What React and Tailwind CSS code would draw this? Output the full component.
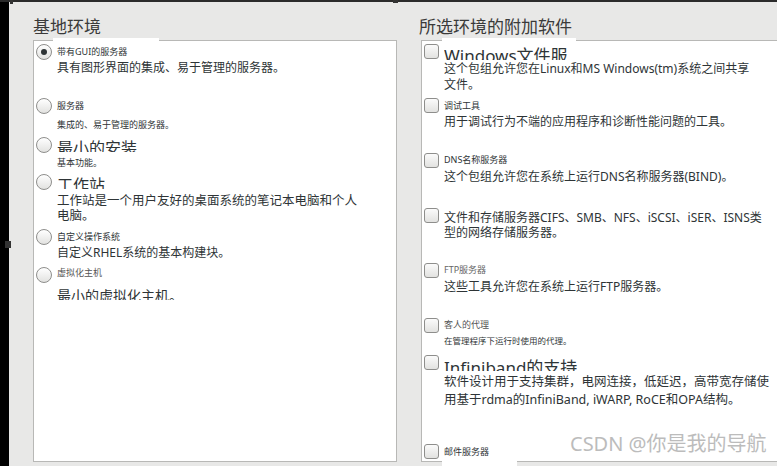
function Radio({ checked }) {
  return (
    <span className="w-[16px] h-[16px] shrink-0 rounded-full border border-[#8e8e8c] bg-linear-to-b from-white to-[#e2e2e0] flex items-center justify-center">
      {checked && <span className="w-[6px] h-[6px] rounded-full bg-[#2e3436]" />}
    </span>
  );
}

function Check() {
  return (
    <span className="w-[15px] h-[15px] shrink-0 rounded-[3px] border border-[#8e8e8c] bg-linear-to-b from-[#fbfbfb] to-[#e2e2e0]" />
  );
}

function Row({ control, className, children }) {
  return (
    <div className={'flex gap-[5px] shrink-0 ' + className}>
      {control}
      <div className="flex flex-col min-w-0">{children}</div>
    </div>
  );
}

export default function App() {
  return (
    <div className="relative w-[777px] h-[466px] overflow-hidden bg-[#e8e8e7] flex flex-col text-[#2e3436] font-['Noto_Sans','Noto_Sans_CJK_SC',sans-serif]">
      <div className="h-[2px] bg-[#2b2b2b] shrink-0" />
      <div className="flex flex-1">
        <div className="w-[9px] bg-black shrink-0" />

        {/* 基地环境 */}
        <div className="pl-[24px] flex flex-col shrink-0">
          <h2 className="h-[38px] pt-[15px] text-[17px] leading-[20px] text-[#3a3a3a]">基地环境</h2>
          <div className="h-[422px] w-[364px] border border-[#b8b8b6] bg-white pl-[2px] pt-[3px] overflow-hidden flex flex-col">
            <Row control={<Radio checked />} className="h-[54px]">
              <span className="text-[9px] leading-[16px]">带有GUI的服务器</span>
              <span className="text-[12px] leading-[16px]">具有图形界面的集成、易于管理的服务器。</span>
            </Row>
            <Row control={<Radio />} className="h-[39px]">
              <span className="text-[9px] leading-[16px]">服务器</span>
              <span className="text-[9px] leading-[16px] mt-[3px]">集成的、易于管理的服务器。</span>
            </Row>
            <Row control={<Radio />} className="h-[37px]">
              <div className="h-[15px] overflow-hidden">
                <div className="text-[16px] leading-[16px] mt-[3px]">最小的安装</div>
              </div>
              <span className="text-[9px] leading-[16px] mt-[3px]">基本功能。</span>
            </Row>
            <Row control={<Radio />} className="h-[55px]">
              <div className="h-[15px] overflow-hidden">
                <div className="text-[16px] leading-[16px] mt-[3px]">工作站</div>
              </div>
              <span className="text-[12.5px] leading-[15px] mt-[4px]">
                工作站是一个用户友好的桌面系统的笔记本电脑和个人
                <br />
                电脑。
              </span>
            </Row>
            <Row control={<Radio />} className="h-[38px]">
              <span className="text-[9px] leading-[16px]">自定义操作系统</span>
              <span className="text-[12px] leading-[16px]">自定义RHEL系统的基本构建块。</span>
            </Row>
            <Row control={<Radio />} className="h-[40px]">
              <span className="text-[9px] leading-[12px] text-[#555]">虚拟化主机</span>
              <div className="h-[12px] mt-[9px] overflow-hidden">
                <div className="text-[14px] leading-[16px]">最小的虚拟化主机。</div>
              </div>
            </Row>
          </div>
        </div>

        {/* 所选环境的附加软件 */}
        <div className="ml-[24px] flex-1 flex flex-col min-w-0">
          <h2 className="h-[38px] pt-[15px] -ml-[2px] text-[17px] leading-[20px] text-[#3a3a3a]">所选环境的附加软件</h2>
          <div className="h-[422px] border-l border-y border-[#b8b8b6] bg-white pl-[2px] pt-[3px] overflow-hidden flex flex-col">
            <Row control={<Check />} className="h-[54px]">
              <div className="h-[16px] overflow-hidden">
                <div className="text-[17px] leading-[20px] mt-[2px] whitespace-nowrap">Windows文件服</div>
              </div>
              <span className="text-[12px] leading-[16px] mt-[1px] whitespace-nowrap">
                这个包组允许您在Linux和MS Windows(tm)系统之间共享
                <br />
                文件。
              </span>
            </Row>
            <Row control={<Check />} className="h-[55px]">
              <span className="text-[9px] leading-[16px]">调试工具</span>
              <span className="text-[12px] leading-[16px] whitespace-nowrap">用于调试行为不端的应用程序和诊断性能问题的工具。</span>
            </Row>
            <Row control={<Check />} className="h-[55px]">
              <span className="text-[9px] leading-[14px]">DNS名称服务器</span>
              <span className="text-[12px] leading-[16px] mt-[2px] whitespace-nowrap">这个包组允许您在系统上运行DNS名称服务器(BIND)。</span>
            </Row>
            <Row control={<Check />} className="h-[55px]">
              <span className="text-[12px] leading-[15px] mt-[2px] whitespace-nowrap">
                文件和存储服务器CIFS、SMB、NFS、iSCSI、iSER、ISNS类
                <br />
                型的网络存储服务器。
              </span>
            </Row>
            <Row control={<Check />} className="h-[55px]">
              <span className="text-[9px] leading-[14px] text-[#666]">FTP服务器</span>
              <span className="text-[12px] leading-[16px] mt-[2px] whitespace-nowrap">这些工具允许您在系统上运行FTP服务器。</span>
            </Row>
            <Row control={<Check />} className="h-[37px]">
              <span className="text-[9px] leading-[14px] text-[#555]">客人的代理</span>
              <span className="text-[8.5px] leading-[12px] mt-[3px]">在管理程序下运行时使用的代理。</span>
            </Row>
            <Row control={<Check />} className="h-[89px]">
              <div className="h-[16px] overflow-hidden">
                <div className="text-[17px] leading-[20px] mt-[3px] whitespace-nowrap">Infiniband的支持</div>
              </div>
              <span className="text-[12.5px] leading-[18px] mt-[2px] whitespace-nowrap">
                软件设计用于支持集群，电网连接，低延迟，高带宽存储使
                <br />
                用基于rdma的InfiniBand, iWARP, RoCE和OPA结构。
              </span>
            </Row>
            <Row control={<Check />} className="h-[20px]">
              <span className="text-[9px] leading-[16px]">邮件服务器</span>
            </Row>
          </div>
        </div>
      </div>

      {/* rendering glitches over the frames */}
      <div className="absolute left-[53px] top-[38px] w-[106px] h-[3px] bg-white" />
      <div className="absolute left-[442px] top-[38px] w-[134px] h-[3px] bg-white" />
      <div className="absolute left-[442px] top-[461px] w-[75px] h-[5px] bg-white" />
      <div className="absolute left-[5px] top-[241px] w-[6px] h-[7px] bg-[#333]" />
      <div className="absolute left-[10px] top-0 w-[3px] h-[4px] bg-[#333]" />
      <div className="absolute left-[393px] top-0 w-[5px] h-[3px] bg-[#333]" />

      {/* watermark */}
      <div className="absolute left-[570px] top-[432px] text-[20px] leading-[24px] text-[#bcbcbc] whitespace-nowrap">
        CSDN @你是我的导航
      </div>
    </div>
  );
}
